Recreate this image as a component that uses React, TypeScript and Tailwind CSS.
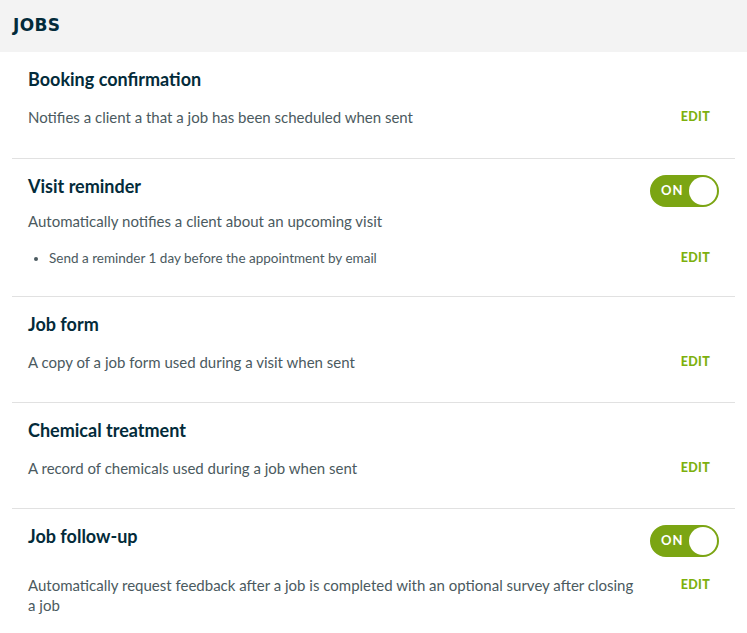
import { useState } from 'react'

const FONT = "font-['Lato','Noto_Sans',sans-serif]"

type Item = {
  title: string
  desc: string
  bullet?: string
  toggle?: boolean
}

const ITEMS: Item[] = [
  { title: 'Booking confirmation', desc: 'Notifies a client a that a job has been scheduled when sent' },
  {
    title: 'Visit reminder',
    desc: 'Automatically notifies a client about an upcoming visit',
    bullet: 'Send a reminder 1 day before the appointment by email',
    toggle: true,
  },
  { title: 'Job form', desc: 'A copy of a job form used during a visit when sent' },
  { title: 'Chemical treatment', desc: 'A record of chemicals used during a job when sent' },
  {
    title: 'Job follow-up',
    desc: 'Automatically request feedback after a job is completed with an optional survey after closing a job',
    toggle: true,
  },
]

function Toggle({ on, onToggle }: { on: boolean; onToggle: () => void }) {
  return (
    <button
      onClick={onToggle}
      className={`-mr-[9px] flex h-[32px] w-[69px] shrink-0 items-center rounded-full border-2 border-[#7ba513] ${on ? 'bg-[#7ba513]' : 'bg-white'}`}
    >
      <span className={`pl-[9px] text-[13px] font-bold tracking-[1px] ${on ? 'text-white' : 'text-[#7ba513]'}`}>ON</span>
      <span className="ml-auto h-[28px] w-[28px] rounded-full bg-white" />
    </button>
  )
}

function Row({ item, first }: { item: Item; first: boolean }) {
  const [on, setOn] = useState(true)
  const pb = item.bullet ? 'pb-[27px]' : first ? 'pb-[31px]' : 'pb-[30px]'
  return (
    <div className={`border-b border-[#e1e1e1] pl-4 pr-[25px] pt-4 last:border-b-0 last:pb-4 ${pb}`}>
      <div className="flex h-[22px] items-start justify-between">
        <h3 className="text-[18px] font-bold leading-[22px] text-[#032b3a]">{item.title}</h3>
        {item.toggle && <Toggle on={on} onToggle={() => setOn(v => !v)} />}
      </div>
      {item.bullet ? (
        <>
          <p className="mt-[13px] text-[15px] leading-[22px] text-[#4b5a60]">{item.desc}</p>
          <div className="mt-[15px] flex items-start justify-between">
            <ul className="list-disc pl-[21px] text-[13.5px] leading-[22px] text-[#4b5a60]">
              <li>{item.bullet}</li>
            </ul>
            <a className="text-[12.5px] font-black leading-[22px] tracking-[0.3px] text-[#7db00e]">EDIT</a>
          </div>
        </>
      ) : (
        <div className={`${item.toggle ? 'mt-[28px]' : 'mt-[17px]'} flex items-start justify-between gap-10`}>
          <p className="max-w-[620px] text-[15px] leading-[20px] text-[#4b5a60]">{item.desc}</p>
          <a className="text-[12.5px] font-black leading-[20px] tracking-[0.3px] text-[#7db00e]">EDIT</a>
        </div>
      )}
    </div>
  )
}

export default function App() {
  return (
    <div className={`min-h-screen bg-white ${FONT}`}>
      <div className="flex h-[52px] items-center bg-[#f3f3f3] px-[13px]">
        <h2 className="font-['DejaVu_Sans',sans-serif] text-[17px] font-bold uppercase tracking-[0.3px] text-[#032b3a]">Jobs</h2>
      </div>
      <div className="mx-3">
        {ITEMS.map((item, i) => (
          <Row key={item.title} item={item} first={i === 0} />
        ))}
      </div>
    </div>
  )
}
